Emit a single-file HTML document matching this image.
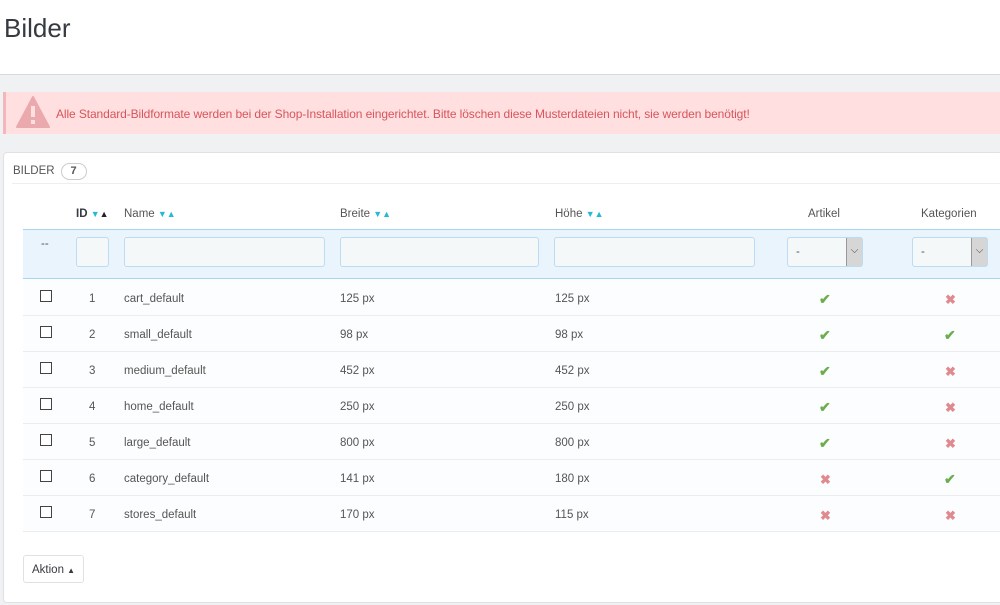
<!DOCTYPE html>
<html><head><meta charset="utf-8"><style>
*{box-sizing:border-box;margin:0;padding:0}
body{width:1000px;height:605px;overflow:hidden;background:#eff1f2;font-family:"Liberation Sans",sans-serif;color:#555;position:relative;font-size:11.5px}
.top{position:absolute;left:0;top:0;width:1000px;height:75px;background:#fff;border-bottom:1px solid #d8dbde}
h1{position:absolute;left:4px;top:13px;font-weight:normal;font-size:26px;color:#363a41}
.alert{position:absolute;left:3px;top:92px;width:997px;height:42px;background:#ffdfe0;border-left:3px solid #f4b6b9;color:#d8555b;font-size:12px}
.alert span{position:absolute;left:50px;top:15px;letter-spacing:-0.1px}
.panel{position:absolute;left:3px;top:152px;width:1000px;height:451px;background:#fff;border:1px solid #dfe2e4;border-radius:4px}
.ph{position:absolute;left:9px;top:10px;font-size:11.5px;color:#555;}
.badge{display:inline-block;margin-left:6px;border:1px solid #ccc;border-radius:10px;padding:0 9px;font-weight:bold;font-size:11px;line-height:15px}
.hl{position:absolute;left:8px;right:0;top:30px;border-top:1px solid #eee}
.a{position:absolute;white-space:nowrap}
.hd{top:208px;color:#555}
.filt{position:absolute;left:23px;width:977px;top:229px;height:50px;background:#eaf4fc;border-top:1px solid #a8d4ef;border-bottom:1px solid #a8d4ef}
.in{position:absolute;top:237px;height:30px;background:#f5f8f9;border:1px solid #bbdcf2;border-radius:3px}
.sel{position:absolute;top:237px;width:76px;height:30px;background:#f5f8f9;border:1px solid #bbdcf2;border-radius:3px}
.sel i{position:absolute;right:0;top:0;width:16px;height:28px;background:#d6d6d6;border-left:1px solid #999;font-style:normal;font-size:10px;text-align:center;line-height:26px;color:#444}
.sel b{position:absolute;left:8px;top:8px;font-weight:normal}
.row{position:absolute;left:23px;width:977px;height:36px;background:#fcfdfe;border-bottom:1px solid #eaeced}
.cb{position:absolute;left:40px;width:12px;height:12px;border:1px solid #444;background:#fff}
.ok{color:#6cae4f;font-size:14px;font-weight:bold}
.no{color:#e08a8f;font-size:13px;font-weight:bold}
.ar{color:#25b9d7;font-size:9px}
.btn{position:absolute;left:23px;top:555px;width:61px;height:28px;border:1px solid #dfe2e4;border-radius:3px;background:#fff;padding:8px 0 0 8px;color:#363a41}
.r .a{margin-top:2px}
</style></head><body>
<div class="top"><h1>Bilder</h1></div>
<div class="alert"><svg style="position:absolute;left:10px;top:4px" width="34" height="32" viewBox="0 0 34 32"><path d="M17 1 L33 31 L1 31 Z" fill="#e9a9ad" stroke="#e9a9ad" stroke-linejoin="round" stroke-width="2"/><rect x="15" y="10" width="4" height="11" fill="#ffdfe0"/><rect x="15" y="24" width="4" height="4" fill="#ffdfe0"/></svg><span>Alle Standard-Bildformate werden bei der Shop-Installation eingerichtet. Bitte löschen diese Musterdateien nicht, sie werden benötigt!</span></div>
<div class="panel"><div class="ph">BILDER<span class="badge">7</span></div><div class="hl"></div></div>
<div class="a hd" style="left:76px;font-weight:bold;color:#363a41">ID <span class="ar">▼</span><span style="font-size:9px;color:#222">▲</span></div>
<div class="a hd" style="left:124px">Name <span class="ar">▼▲</span></div>
<div class="a hd" style="left:340px">Breite <span class="ar">▼▲</span></div>
<div class="a hd" style="left:555px">Höhe <span class="ar">▼▲</span></div>
<div class="a hd" style="left:808px">Artikel</div>
<div class="a hd" style="left:921px">Kategorien</div>
<div class="filt"></div>
<div class="a" style="left:41px;top:238px">--</div>
<div class="in" style="left:76px;width:33px"></div>
<div class="in" style="left:124px;width:201px"></div>
<div class="in" style="left:340px;width:199px"></div>
<div class="in" style="left:554px;width:201px"></div>
<div class="sel" style="left:787px"><b>-</b><i>⌵</i></div>
<div class="sel" style="left:912px"><b>-</b><i>⌵</i></div>
<div class="row" style="top:280px"></div><div class="row" style="top:316px"></div><div class="row" style="top:352px"></div><div class="row" style="top:388px"></div><div class="row" style="top:424px"></div><div class="row" style="top:460px"></div><div class="row" style="top:496px"></div>
<div class="r">
<div class="cb" style="top:290px"></div><div class="a" style="left:89px;top:291px">1</div><div class="a" style="left:124px;top:291px">cart_default</div><div class="a" style="left:340px;top:291px">125 px</div><div class="a" style="left:555px;top:291px">125 px</div><div class="a ok" style="left:819px;top:289px">✔</div><div class="a no" style="left:945px;top:290px">✖</div>
<div class="cb" style="top:326px"></div><div class="a" style="left:89px;top:327px">2</div><div class="a" style="left:124px;top:327px">small_default</div><div class="a" style="left:340px;top:327px">98 px</div><div class="a" style="left:555px;top:327px">98 px</div><div class="a ok" style="left:819px;top:325px">✔</div><div class="a ok" style="left:944px;top:325px">✔</div>
<div class="cb" style="top:362px"></div><div class="a" style="left:89px;top:363px">3</div><div class="a" style="left:124px;top:363px">medium_default</div><div class="a" style="left:340px;top:363px">452 px</div><div class="a" style="left:555px;top:363px">452 px</div><div class="a ok" style="left:819px;top:361px">✔</div><div class="a no" style="left:945px;top:362px">✖</div>
<div class="cb" style="top:398px"></div><div class="a" style="left:89px;top:399px">4</div><div class="a" style="left:124px;top:399px">home_default</div><div class="a" style="left:340px;top:399px">250 px</div><div class="a" style="left:555px;top:399px">250 px</div><div class="a ok" style="left:819px;top:397px">✔</div><div class="a no" style="left:945px;top:398px">✖</div>
<div class="cb" style="top:434px"></div><div class="a" style="left:89px;top:435px">5</div><div class="a" style="left:124px;top:435px">large_default</div><div class="a" style="left:340px;top:435px">800 px</div><div class="a" style="left:555px;top:435px">800 px</div><div class="a ok" style="left:819px;top:433px">✔</div><div class="a no" style="left:945px;top:434px">✖</div>
<div class="cb" style="top:470px"></div><div class="a" style="left:89px;top:471px">6</div><div class="a" style="left:124px;top:471px">category_default</div><div class="a" style="left:340px;top:471px">141 px</div><div class="a" style="left:555px;top:471px">180 px</div><div class="a no" style="left:820px;top:470px">✖</div><div class="a ok" style="left:944px;top:469px">✔</div>
<div class="cb" style="top:506px"></div><div class="a" style="left:89px;top:507px">7</div><div class="a" style="left:124px;top:507px">stores_default</div><div class="a" style="left:340px;top:507px">170 px</div><div class="a" style="left:555px;top:507px">115 px</div><div class="a no" style="left:820px;top:506px">✖</div><div class="a no" style="left:945px;top:506px">✖</div>
</div>
<div class="btn">Aktion <span style="font-size:8px">▲</span></div>
</body></html>
